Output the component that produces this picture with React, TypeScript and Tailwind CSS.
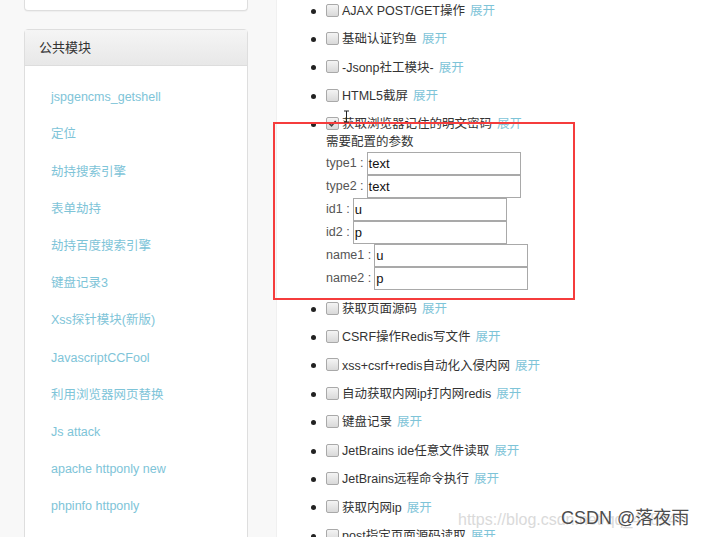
const sideLinks = [
  "jspgencms_getshell",
  "定位",
  "劫持搜索引擎",
  "表单劫持",
  "劫持百度搜索引擎",
  "键盘记录3",
  "Xss探针模块(新版)",
  "JavascriptCCFool",
  "利用浏览器网页替换",
  "Js attack",
  "apache httponly new",
  "phpinfo httponly",
];

const topModules = ["AJAX POST/GET操作", "基础认证钓鱼", "-Jsonp社工模块-", "HTML5截屏"];

const bottomModules = [
  "获取页面源码",
  "CSRF操作Redis写文件",
  "xss+csrf+redis自动化入侵内网",
  "自动获取内网ip打内网redis",
  "键盘记录",
  "JetBrains ide任意文件读取",
  "JetBrains远程命令执行",
  "获取内网ip",
  "post指定页面源码读取",
];

const params = [
  { label: "type1", value: "text" },
  { label: "type2", value: "text" },
  { label: "id1", value: "u" },
  { label: "id2", value: "p" },
  { label: "name1", value: "u" },
  { label: "name2", value: "p" },
];

function Checkbox({ checked = false }: { checked?: boolean }) {
  return (
    <span className="relative inline-block h-[13px] w-[13px] shrink-0 rounded-[2px] border border-[#a9a9a9] bg-gradient-to-b from-[#f4f4f4] to-[#d9d9d9]">
      {checked && (
        <svg viewBox="0 0 12 12" className="absolute left-0 top-0 h-[11px] w-[11px]">
          <path d="M2.5 6.2 L5 8.6 L9.5 3.2" fill="none" stroke="#444" strokeWidth="1.8" />
        </svg>
      )}
    </span>
  );
}

function ModuleRow({ name, checked = false }: { name: string; checked?: boolean }) {
  return (
    <div className="flex h-[28.4px] items-center">
      <span className="ml-[34px] h-[5px] w-[5px] rounded-full bg-[#222]" />
      <span className="-mt-[2px] ml-[10px] flex">
        <Checkbox checked={checked} />
      </span>
      <span className="ml-[3px] text-[#333]">{name}</span>
      <span className="ml-[5px] text-[#7ec4d8]">展开</span>
    </div>
  );
}

export default function App() {
  return (
    <div
      className="relative flex h-[537px] w-[708px] overflow-hidden bg-white text-[12.5px]"
      style={{ fontFamily: '"Liberation Sans", Arial, "Noto Sans CJK SC", sans-serif' }}
    >
      <aside className="w-[277px] shrink-0 border-r border-[#f0f0f0] bg-[#f8f8f8] pl-[24px] pr-[28px]">
        <div className="h-[11px] rounded-b-[4px] border-x border-b border-[#dedede] bg-white shadow-[0_1px_1px_rgba(0,0,0,0.04)]" />
        <section className="mt-[18px] rounded-t-[4px] border border-[#dedede] bg-white">
          <header className="flex h-[36px] items-center border-b border-[#dddddd] bg-gradient-to-b from-[#f5f5f5] to-[#e8e8e8] px-[14px] text-[13px] text-[#333]">
            公共模块
          </header>
          <ul className="pb-[20px] pt-[13px]">
            {sideLinks.map((link) => (
              <li key={link} className="flex h-[37.2px] items-center pl-[26px] text-[#7ec4d8]">
                {link}
              </li>
            ))}
          </ul>
        </section>
      </aside>

      <main className="-mt-[3px] flex-1">
        {topModules.map((m) => (
          <ModuleRow key={m} name={m} />
        ))}
        <ModuleRow name="获取浏览器记住的明文密码" checked />
        <div className="-mt-[6px] pl-[49px] text-[#555]">
          <div className="h-[18px] leading-[18px] text-[#333]">需要配置的参数</div>
          <div className="mt-[1px]">
            {params.map((p) => (
              <div key={p.label} className="flex h-[23px] items-center">
                <span className="pr-[3px]">{p.label} :</span>
                <span className="flex h-[23px] w-[154px] items-center border border-[#a9a9a9] bg-white pl-[1px] text-[13px] text-[#111]">
                  {p.value}
                </span>
              </div>
            ))}
          </div>
        </div>
        <div className="mt-[5px]">
          {bottomModules.map((m) => (
            <ModuleRow key={m} name={m} />
          ))}
        </div>
      </main>

      {/* red annotation box */}
      <div className="pointer-events-none absolute left-[273px] top-[122px] h-[178px] w-[302px] border-2 border-[#f53c3c]" />

      {/* text cursor */}
      <svg className="pointer-events-none absolute left-[343px] top-[110px] h-[13px] w-[7px]" viewBox="0 0 7 13">
        <path d="M1 1 H6 M3.5 1 V12 M1 12 H6" fill="none" stroke="#222" strokeWidth="1" />
      </svg>

      {/* watermark */}
      <div className="pointer-events-none absolute left-[458px] top-[508px] whitespace-nowrap text-[16px] text-[#dadada]">
        https://blog.csdn.net/qq_45894
      </div>
      <div className="pointer-events-none absolute left-[561px] top-[505px] whitespace-nowrap text-[18px] text-[#4d4d4d] [text-shadow:0_0_2px_#fff]">
        CSDN @落夜雨
      </div>
    </div>
  );
}
